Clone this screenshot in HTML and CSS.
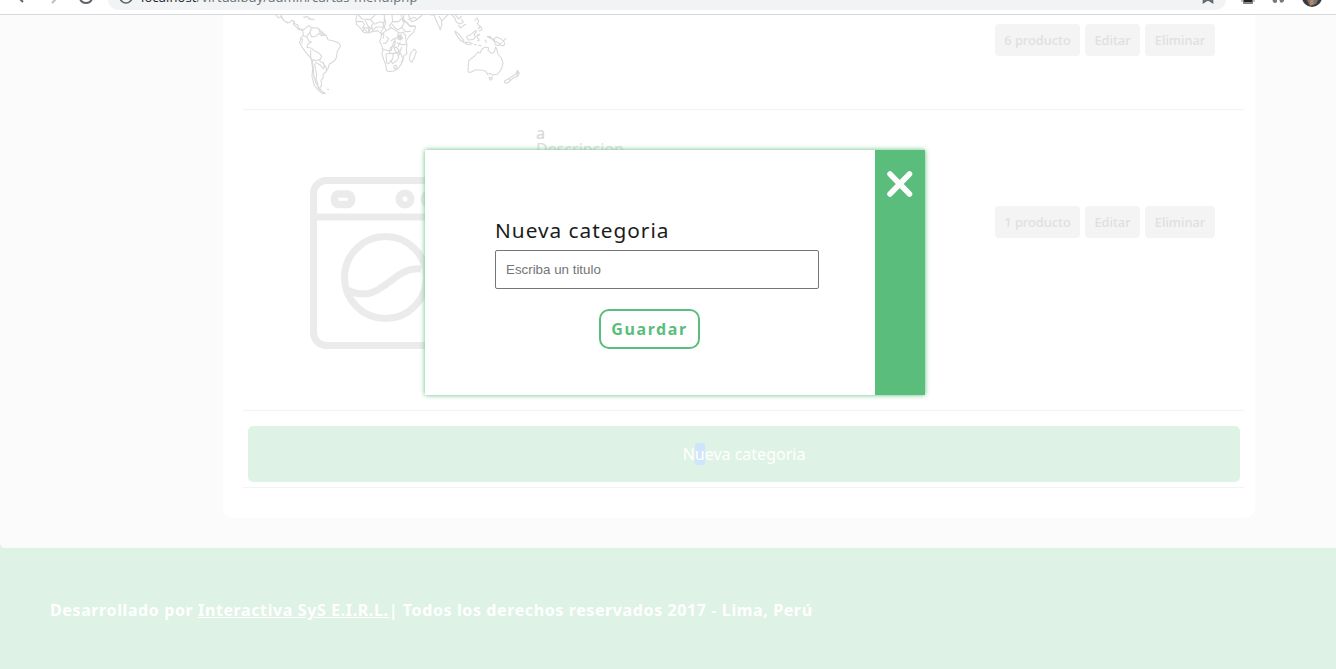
FILE: index.html
```html
<!DOCTYPE html>
<html lang="es">
<head>
<meta charset="utf-8">
<title>Categorias</title>
<link rel="stylesheet" href="styles.css">
</head>
<body>
<div class="toolbar">
  <svg class="nav" width="108" height="14" viewBox="0 0 108 14" fill="none" stroke-width="2">
    <path d="M16-5 23 2" stroke="#5f6368"/>
    <path d="M52 3 58-3" stroke="#bbbdc0"/>
    <path d="M80-1A6.5 6.5 0 0 0 92-1" stroke="#5f6368"/>
  </svg>
  <div class="address">
    <svg width="16" height="10" viewBox="0 0 16 10" fill="none" stroke="#5f6368" stroke-width="1.7"><path d="M2-3a6 6 0 0 0 12 0M8-5V0"/></svg>
    <span class="url"><b>localhost</b>/virtualbuy/admin/cartas-menu.php</span>
    <svg class="star" width="14" height="10" viewBox="0 0 14 10" fill="none" stroke="#5f6368" stroke-width="1.7"><path d="M3-5 2.500 2.300 7-.5 11.500 2.300 11-5"/></svg>
  </div>
  <svg class="tools" width="110" height="14" viewBox="0 0 110 14">
    <path d="M15-1h14v3h-14z" fill="#c4c4c4"/><path d="M17.500-2h9v5.500h-9z" fill="#fff" stroke="#777"/><path d="M18-1h8v3.500h-8z" fill="#222"/>
    <path d="M46-2h5v4q-2 2-4 0zM53-2h5v3q-2 3-4 1z" fill="#77797c"/>
    <circle cx="86" cy="-3" r="10" fill="#3b3b3d"/><path d="M80-2h4l2 3 4-3h3l-3 6-6 2z" fill="#777"/><path d="M84-1h4l-1 6h-3z" fill="#b98562"/>
  </svg>
</div>
<main class="page">
  <section class="card">
    <article class="row row-first">
      <svg class="map" width="300" height="94" viewBox="9 15 900 282" fill="none" stroke="#d9d9d9" stroke-width="3.300" stroke-linejoin="round">
        <path d="M108 15L114 23 122 20 134 34 148 38 155 31 163 34 160 43 168 50 176 59 190 57M122 15L132 32 144 40M190 22l12-2 10 7M205 27l18 2M158 32l7 9 8 4 5 12 10 5"/>
        <path d="M188 62L202 50 207 47 213 53 232 54 244 65 259 78 264 89 281 93 297 100 302 108 292 124 289 143 283 153 268 162 264 176 257 186 249 194 250 203 243 211 245 226 239 234 244 243 256 250 246 250 233 239 222 224 216 199 218 176 214 146 198 128 186 111 179 98 183 82 190 76z"/>
        <path d="M190 78L199 80 209 68 216 53M210 68l5 12 12-1 9-9 8 7 15-2M201 81l5 11 8 4-10 6-3 10 14 3 10 9 12 5 8 10-4 9-15 4-5-3-5 7-4-14 0-22M216 148l4 24 1 23 6 22 12 20M237 148l4 6 9 6 5 8-5 8-8-10-16-9M249 155l5 16M257 168l3 15M239 56l0 10 9 8M247 64l4 12M261 238l6 1M180 87l8 0-3 14M224 160l2 14 4 20-2 12 5 15 1 10 7 12"/>
        <path d="M350 15l-2 13 1 15 13 12 9 12 14 2 15-5 12-2 8 6 4 5-1 10-4 11 6 13 4 12-3 13 5 17 6 15 3 18 6 3 15-2 12-7 10-12 5-12 3-14 10-7-2-12 2-14-3-12 10-15 12-11 7-15-1-4-15 2-13-13-12-16-4-10"/>
        <path d="M355 15l12 12 24 2 14-14M349 35h20l4 9-6 10M376 31l7 16 8 8-4 13M391 29l10 10-7 9 3 13M403 43l17-8 12 4 2-24M428 37l4 14-8 13-2 8M432 51l-11 0-12 0-9 8M432 15l5 24-4 11 5 12-12 10M438 62l16-9 12 8 9 6-2 13-8 9-8 18-3 15-15-1-14-5M456 15l2 19-10 13 6 8M458 34l18 1 8-9 10 8-8 17-12 9-8-5-10-13M492 15l-4 19 11 1 10 12 16 2M485 51l11 14 16-1M488 65l9 12-1 11M474 69l14-2M475 78l10-5M470 98l14 6 14-1M466 93l-2 14-12 5-5 18 18-1 16-6 4-12M438 132l15-2 7 2 12-4 4 16-8 9-10 8-5-8-7 8-6-2zM460 132l-2 15-9 9M474 118l6 9-3 9M481 129l9 18-7 11M461 169l7-4 3 8-8 3zM438 79l8 8-9 13-8 0M424 73l8 0-3 13M373 57l9 10M505 15l10 20 14-5 18-15M503 29l20-7 9 7M372 54l20-1M368 66l5-15M387 69l-3-18M398 67l-2-18M462 112l8 0 7 9-2 8-8-3zM452 94l12-10M481 96l-7 14"/>
        <path d="M523 117l6 7-5 16-8 17-7-5 0-12 3-11zM571 15l11-1 5 14 9 19 5 12 5-16-2-9 11-11 8-8M597 18l8 14M635 15l8 7 6 14 10 6 11-5-6-10M646 15l10 12 9-9M654 46l9 8 5-6 11-6M645 63l13 11 13 17 0 6-10-6-14-20zM674 98l12-2 11 5-13 3zM702 104l8 0M715 106l9 1M681 78l9-2 9-8 8-7 2 4-7 9 5 6-7 8-14 2-6-7zM714 71l-3 10 7 9-7 3M714 78l6-6M704 32l7-8 5 9-4 8 8 8M714 57l8-8 4 10-10 4M742 80l9 0 7 9 12-8 14 6 10 12-2 8-10-1-9-9-11-4-8-7zM763 84l2 19 10 4 10-10M790 93l8-8M735 89l5 9"/>
        <path d="M687 151L685 164 684 186 692 187 706 180 724 180 737 184 743 193 751 190 758 196 773 192 785 176 789 159 784 144 774 132 770 116 767 111 762 128 754 130 744 121 746 113 735 111 725 119 720 129 714 126 704 138zM687 151L704 138M747 202l10 1-2 6-5 1zM832 181L838 190 833 199 819 204 803 219 794 218 794 213 810 203 828 192zM832 185l-1 15M806 206l5 8"/>
        <path d="M475 79l8-2 5 8-7 5-7-3z" fill="#d8d8d8"/>
      </svg>
      <div class="actions actions-first"><span>6 producto</span><span>Editar</span><span>Eliminar</span></div>
    </article>
    <article class="row row-second">
      <svg class="washer" width="150" height="174" viewBox="0 0 150 174" fill="none" stroke="#ebebeb" stroke-width="7">
        <rect x="3.500" y="3.500" width="145" height="165" rx="13"/>
        <path d="M6 40H147"/>
        <rect x="24.500" y="17" width="17" height="10.500" rx="4" stroke-width="7.500"/>
        <circle cx="95" cy="22" r="6"/><circle cx="120" cy="22" r="6"/>
        <circle cx="75.500" cy="100.500" r="41"/>
        <path d="M37 113c35 17 45-25 74-21"/>
      </svg>
      <div class="copy"><strong>a</strong><span>Descripcion</span></div>
      <div class="actions actions-second"><span>1 producto</span><span>Editar</span><span>Eliminar</span></div>
    </article>
    <div class="row row-new"><div class="new-category">N<mark>u</mark>eva categoria</div></div>
  </section>
</main>
<footer class="footer"><p>Desarrollado por <u>Interactiva SyS E.I.R.L.</u>| Todos los derechos reservados 2017 - Lima, Perú</p></footer>
<form class="modal">
  <div class="modal-body">
    <label for="title">Nueva categoria</label>
    <input id="title" type="text" placeholder="Escriba un titulo">
    <button class="save" type="button">Guardar</button>
  </div>
  <button class="close" type="button" aria-label="Cerrar">
    <svg width="26" height="26" viewBox="0 0 26 26" stroke="#fff" stroke-width="5.500" stroke-linecap="round"><path d="M3 3 22.500 23M22.500 3 3 23"/></svg>
  </button>
</form>
</body>
</html>
```
FILE: styles.css
```css
* { box-sizing: border-box; }
body {
  margin: 0;
  width: 1336px;
  height: 669px;
  overflow: hidden;
  position: relative;
  font: 16px/22px "Noto Sans", sans-serif;
  background: #def2e5;
}
.toolbar {
  height: 15px;
  display: flex;
  overflow: hidden;
  background: #fff;
  border-bottom: 1px solid #d8d8dc;
}
.toolbar svg { flex: none; }
.address {
  width: 1118px;
  height: 10px;
  display: flex;
  padding: 0 11px 0 10px;
  background: #f1f3f4;
  border-radius: 0 0 12px 12px;
}
.url {
  margin: -13px 0 0 7px;
  font: 13px/20px "Open Sans", sans-serif;
  letter-spacing: .12px;
  color: #6b6e72;
  white-space: nowrap;
}
.url b { font-weight: 400; color: #202124; }
.star { margin-left: auto; }
.page {
  height: 533px;
  padding-left: 223px;
  background: #fbfbfb;
  border-bottom-left-radius: 5px;
}
.card {
  width: 1032px;
  height: 503px;
  padding: 0 11px 0 20px;
  background: #fff;
  border-radius: 0 0 10px 10px;
}
.row {
  width: 1001px;
  display: flex;
  border-bottom: 1px solid #f3f3f3;
}
.row-first { height: 95px; }
.row-second { height: 301px; }
.row-new { height: 77px; padding: 15px 4px 5px 5px; }
.map, .washer { flex: none; }
.washer { margin: 67px 0 0 67px; }
.copy {
  margin: 15px 0 0 76px;
  display: flex;
  flex-direction: column;
  line-height: 16px;
  color: #dedede;
}
.copy strong { font-weight: 500; color: #d9d9d9; }
.actions {
  display: flex;
  gap: 5px;
  margin-left: auto;
  margin-right: 29px;
}
.actions-first { margin-top: 9px; }
.actions-second { margin-top: 96px; }
.actions span {
  height: 32px;
  width: 55px;
  text-align: center;
  font-size: 12.8px;
  line-height: 33px;
  font-weight: 500;
  color: #e0e0e0;
  background: #f4f4f4;
  border-radius: 4px;
}
.actions span:first-child { width: 85px; }
.actions span:last-child { width: 70px; }
.new-category {
  width: 992px;
  height: 56px;
  line-height: 56px;
  text-align: center;
  color: #fff;
  background: #def2e5;
  border-radius: 5px;
}
.new-category mark { color: #fff; background: #cfe5fb; }
.footer { padding: 51px 50px; }
.footer p {
  margin: 0;
  font-weight: 700;
  letter-spacing: .61px;
  color: #fff;
  white-space: nowrap;
}
.modal {
  position: absolute;
  left: 425px;
  top: 150px;
  width: 500px;
  height: 245px;
  display: flex;
  background: #fff;
  box-shadow: 0 0 5px #5bbd7c;
}
.modal-body {
  width: 450px;
  padding: 64px 56px 0 70px;
  display: flex;
  flex-direction: column;
}
.modal label {
  height: 36px;
  font-size: 20.8px;
  line-height: 33px;
  letter-spacing: 1px;
  color: #1c1c1c;
}
.modal input {
  width: 324px;
  height: 39px;
  padding: 0 10px;
  border: 1px solid #767676;
  border-radius: 2px;
  font: 13.333px "Liberation Sans", sans-serif;
}
.modal input::placeholder { color: #757575; }
.save {
  width: 101px;
  height: 40px;
  margin: 20px 0 0 104px;
  padding: 0;
  font: 700 16px/22px "Noto Sans", sans-serif;
  letter-spacing: 1.6px;
  color: #5bbd7c;
  background: #fff;
  border: 2px solid #5bbd7c;
  border-radius: 10px;
}
.close {
  width: 50px;
  padding: 21px 0 0 12px;
  display: flex;
  align-items: flex-start;
  border: 0;
  background: #5bbd7c;
}
```
